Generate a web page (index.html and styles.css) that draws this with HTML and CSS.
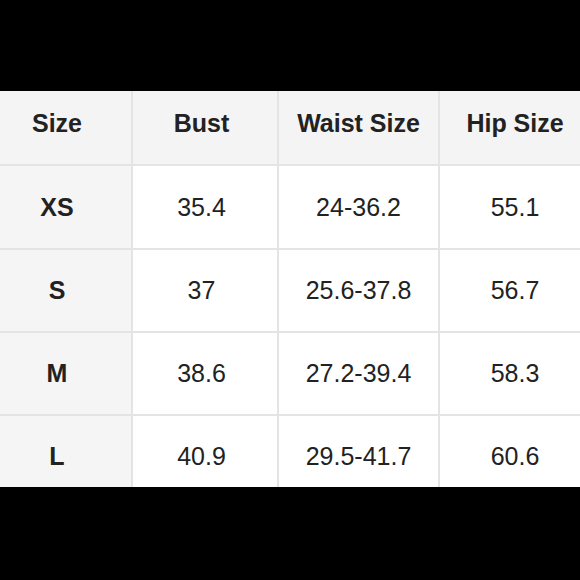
FILE: index.html
```html
<!DOCTYPE html>
<html>
<head>
<meta charset="utf-8">
<link rel="stylesheet" href="styles.css">
</head>
<body>
<div class="chart">
  <div class="cell head c1">Size</div>
  <div class="cell head c2">Bust</div>
  <div class="cell head c3">Waist Size</div>
  <div class="cell head c4">Hip Size</div>

  <div class="cell label c1">XS</div>
  <div class="cell c2">35.4</div>
  <div class="cell c3">24-36.2</div>
  <div class="cell c4">55.1</div>

  <div class="cell label c1">S</div>
  <div class="cell c2">37</div>
  <div class="cell c3">25.6-37.8</div>
  <div class="cell c4">56.7</div>

  <div class="cell label c1">M</div>
  <div class="cell c2">38.6</div>
  <div class="cell c3">27.2-39.4</div>
  <div class="cell c4">58.3</div>

  <div class="cell label c1 last">L</div>
  <div class="cell c2 last">40.9</div>
  <div class="cell c3 last">29.5-41.7</div>
  <div class="cell c4 last">60.6</div>
</div>
</body>
</html>
```
FILE: styles.css
```css
html, body {
  margin: 0;
  padding: 0;
  background: #000;
  height: 100%;
  overflow: hidden;
}
body {
  padding-top: 91px;
  box-sizing: border-box;
  font-family: "Liberation Sans", Arial, sans-serif;
  color: #222;
}
.chart {
  display: grid;
  grid-template-columns: 131px 144px 159px 140px;
  grid-template-rows: 73px 82px 81px 81px 71px;
  gap: 2px;
  background: #e4e4e4;
  width: 580px;
}
.cell {
  background: #fff;
  display: flex;
  align-items: center;
  justify-content: center;
  font-size: 25px;
  line-height: 1;
}
.head {
  background: #f4f4f4;
  font-weight: bold;
  padding-bottom: 8px;
}
.label {
  background: #f5f5f5;
  font-weight: bold;
}
.last { padding-top: 9px; }
.c1 { padding-right: 17px; }
.c2 { padding-right: 7px; }
.c4 { padding-left: 10px; }
```
